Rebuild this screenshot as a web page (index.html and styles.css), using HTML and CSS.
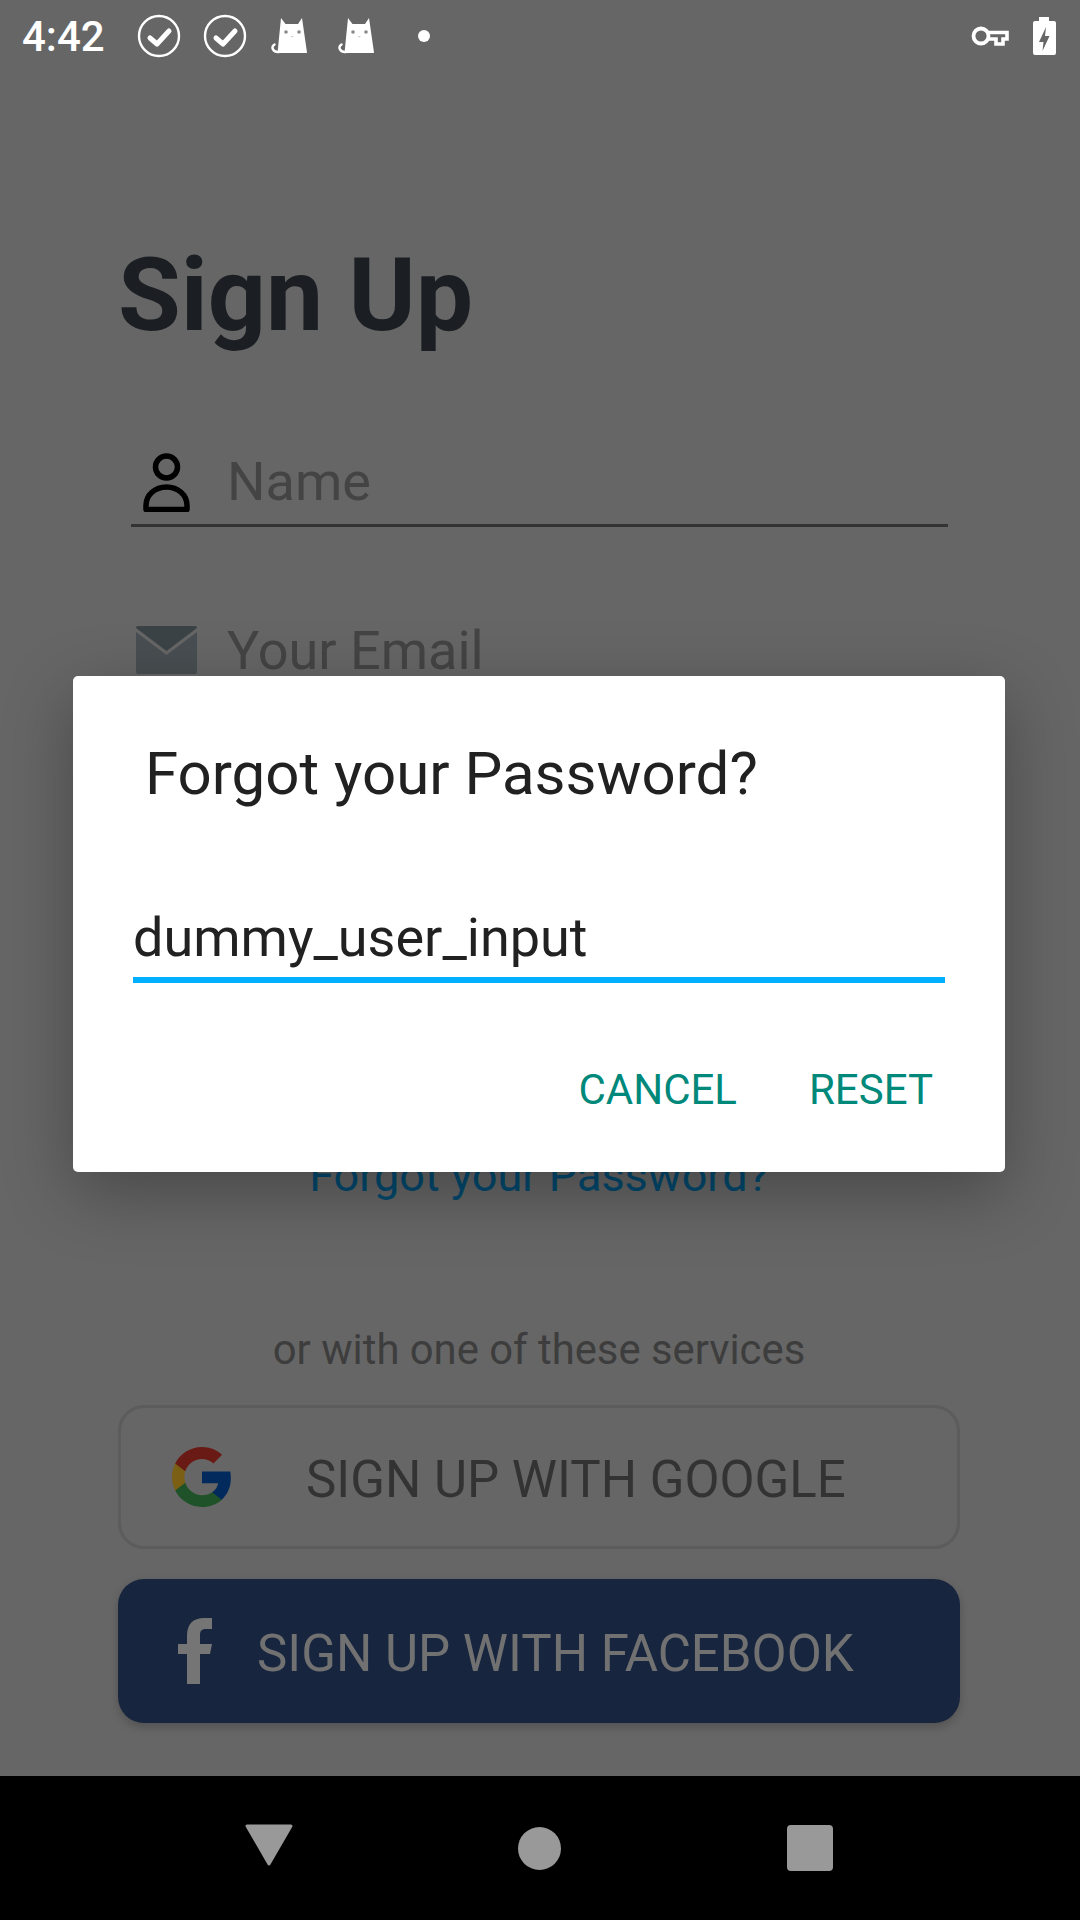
FILE: index.html
```html
<!DOCTYPE html>
<html lang="en">
<head>
<meta charset="utf-8">
<title>Sign Up</title>
<link rel="stylesheet" href="styles.css">
</head>
<body>
<div class="screen">
  <header class="status">
    <span class="time">4:42</span>
    <svg class="ic-check" viewBox="0 0 44 44"><circle cx="22" cy="22" r="20" fill="none" stroke="#fff" stroke-width="2.4"/><path d="M13 24l7 6 12-13" fill="none" stroke="#fff" stroke-width="5" stroke-linecap="round" stroke-linejoin="round"/></svg>
    <svg class="ic-check" viewBox="0 0 44 44"><circle cx="22" cy="22" r="20" fill="none" stroke="#fff" stroke-width="2.4"/><path d="M13 24l7 6 12-13" fill="none" stroke="#fff" stroke-width="5" stroke-linecap="round" stroke-linejoin="round"/></svg>
    <svg class="ic-cat" viewBox="0 0 38 36"><path fill="#fff" d="M11 0l4.500 6h12.500l4-6 5 34.500q0 .5-1 .5H7.500z"/><circle cx="16" cy="14" r="1.800" fill="#8a8a8a"/><circle cx="29" cy="14" r="1.800" fill="#8a8a8a"/><path d="M20.500 18h3.500l-1.700 1.500z" fill="#ccc"/><path d="M9 34C3 34.500 .5 29 4.500 26.500" fill="none" stroke="#fff" stroke-width="2.400" stroke-linecap="round"/></svg>
    <svg class="ic-cat" viewBox="0 0 38 36"><path fill="#fff" d="M11 0l4.500 6h12.500l4-6 5 34.500q0 .5-1 .5H7.500z"/><circle cx="16" cy="14" r="1.800" fill="#8a8a8a"/><circle cx="29" cy="14" r="1.800" fill="#8a8a8a"/><path d="M20.500 18h3.500l-1.700 1.500z" fill="#ccc"/><path d="M9 34C3 34.500 .5 29 4.500 26.500" fill="none" stroke="#fff" stroke-width="2.400" stroke-linecap="round"/></svg>
    <span class="dot"></span>
    <span class="status-spacer"></span>
    <svg class="ic-key" viewBox="0 0 38 20"><circle cx="10" cy="10" r="7.500" fill="none" stroke="#fff" stroke-width="3.800"/><path d="M17 6.500H36V13H32V18H25V13H17" fill="none" stroke="#fff" stroke-width="3.600"/></svg>
    <svg class="ic-batt" viewBox="0 0 23 38"><path fill="#fff" d="M6 0h10v4h5q2 0 2 2v30q0 2-2 2H2q-2 0-2-2V6q0-2 2-2h4z"/><path fill="#666" d="M13 10l-7 15h4.500l-1 9 7-15h-4.500z"/></svg>
  </header>

  <main class="content">
    <h1 class="title">Sign Up</h1>
    <div class="field field-name">
      <svg class="ic-person" viewBox="0 0 47 59"><circle cx="23.500" cy="14" r="11" fill="none" stroke="#000" stroke-width="5.500"/><path d="M3 56.500v-4C3 42 12 34 23.500 34S44 42 44 52.500v4z" fill="none" stroke="#000" stroke-width="5.500" stroke-linejoin="round"/></svg>
      <span class="placeholder">Name</span>
    </div>
    <div class="field field-email">
      <svg class="ic-mail" viewBox="0 0 61 48"><path fill="#3c4346" d="M2 0h57q2 0 2 2L30.500 25 0 2q0-2 2-2z"/><path fill="#484e51" d="M0 6l30.500 23L61 6v40q0 2-2 2H2q-2 0-2-2z"/></svg>
      <span class="placeholder">Your Email</span>
    </div>
    <a class="forgot">Forgot your Password?</a>
    <p class="or">or with one of these services</p>
    <div class="btn btn-google">
      <svg class="ic-google" viewBox="2 2 44 44"><path fill="#032a5c" d="M45.120 24.500c0-1.560-.14-3.060-.4-4.500H24v8.510h11.840c-.51 2.750-2.060 5.080-4.390 6.640v5.520h7.110c4.160-3.830 6.560-9.470 6.560-15.170z"/><path fill="#1f5228" d="M24 46c5.940 0 10.920-1.970 14.560-5.330l-7.110-5.520c-1.970 1.320-4.490 2.210-7.450 2.210-5.730 0-10.580-3.870-12.310-9.070H4.340v5.700C7.960 41.070 15.400 46 24 46z"/><path fill="#7a5f14" d="M11.690 28.180C11.250 26.860 11 25.450 11 24s.25-2.860.69-4.180v-5.700H4.340C2.850 17.090 2 20.450 2 24c0 3.550.85 6.910 2.340 9.880l7.350-5.700z"/><path fill="#6a1a14" d="M24 10.750c3.230 0 6.130 1.110 8.410 3.290l6.310-6.310C34.910 4.180 29.930 2 24 2 15.400 2 7.960 6.930 4.340 14.120l7.350 5.700c1.730-5.200 6.580-9.070 12.310-9.070z"/></svg>
      <span class="btn-label">SIGN UP WITH GOOGLE</span>
    </div>
    <div class="btn btn-facebook">
      <svg class="ic-fb" viewBox="0 0 34 66"><path fill="#757575" d="M9 66V36H0V26H9V18C9 6 15 0 26 0H34V11H28C23 11 22 13 22 18V26H34L32 36H22V66Z"/></svg>
      <span class="btn-label">SIGN UP WITH FACEBOOK</span>
    </div>
  </main>

  <nav class="navbar">
    <svg class="nav-back" viewBox="0 0 48 42"><path fill="#999" stroke="#999" stroke-width="3" stroke-linejoin="round" d="M2 2h44L24 40z"/></svg>
    <span class="nav-home"></span>
    <span class="nav-recent"></span>
  </nav>

  <section class="dialog">
    <h2 class="dialog-title">Forgot your Password?</h2>
    <div class="dialog-input">dummy_user_input</div>
    <div class="dialog-actions">
      <span>CANCEL</span>
      <span>RESET</span>
    </div>
  </section>
</div>
</body>
</html>
```
FILE: styles.css
```css
* { box-sizing: border-box; }
html, body { margin: 0; padding: 0; }
body { font-family: Roboto, "Liberation Sans", sans-serif; background: #666; }
.screen { position: relative; width: 1080px; height: 1920px; background: #666; display: flex; flex-direction: column; overflow: hidden; }

.status { height: 72px; flex: none; display: flex; align-items: center; padding: 0 24px 0 22px; color: #fff; }
.time { font-size: 42px; font-weight: 500; width: 115px; }
.ic-check { width: 44px; height: 44px; margin-right: 22px; }
.ic-cat { width: 38px; height: 36px; margin-right: 29px; }
.ic-check + .ic-cat { margin-left: 1px; }
.dot { width: 12px; height: 12px; border-radius: 50%; background: #fff; margin-left: 14px; }
.status-spacer { flex: 1; }
.ic-key { width: 38px; height: 20px; margin-right: 24px; }
.ic-batt { width: 23px; height: 38px; }

.content { flex: 1; display: flex; flex-direction: column; padding: 162px 120px 0 118px; }
.title { margin: 0; font-size: 102px; line-height: 122px; font-weight: 700; color: #1b1f23; }
.field { display: flex; align-items: center; margin-left: 13px; margin-right: 12px; }
.field-name { margin-top: 75px; height: 96px; border-bottom: 3px solid #333; padding: 10px 0 0 12px; }
.field-name .placeholder { margin: -2px 0 0 -1px; }
.field-email { margin-top: 83px; padding-left: 5px; height: 80px; }
.ic-person { width: 47px; height: 59px; margin-right: 38px; }
.ic-mail { width: 61px; height: 48px; margin-right: 30px; }
.placeholder { font-size: 54px; color: #444; }
.forgot { margin-top: 461px; text-align: center; font-size: 45px; line-height: 50px; color: #00496e; }
.or { margin: 125px 0 0; text-align: center; font-size: 41.8px; line-height: 48px; color: #3d3d3d; }
.btn { display: flex; align-items: center; height: 144px; border-radius: 26px; font-size: 51px; }
.btn-label { padding-top: 5px; }
.btn-google { margin-top: 31px; border: 3px solid #5c5c5c; color: #333; padding-left: 51px; }
.btn-facebook { margin-top: 30px; background: #18253f; color: #717171; padding-left: 60px; box-shadow: 0 4px 10px rgba(0,0,0,.2); }
.ic-google { width: 60px; height: 60px; margin-right: 74px; }
.ic-fb { width: 34px; height: 66px; margin-right: 45px; }

.navbar { height: 144px; flex: none; background: #000; display: grid; grid-template-columns: 271px 271px 270px; align-items: center; justify-items: center; padding-left: 133px; }
.nav-back { width: 48px; height: 42px; margin-bottom: 6px; }
.nav-home { width: 43px; height: 43px; border-radius: 50%; background: #999; }
.nav-recent { width: 46px; height: 46px; border-radius: 4px; background: #999; }

.dialog { position: absolute; left: 73px; top: 676px; width: 932px; height: 496px; background: #fff; border-radius: 5px; box-shadow: 0 20px 70px rgba(0,0,0,.3); padding: 0 60px; }
.dialog-title { margin: 65px 0 0 12px; font-size: 60px; line-height: 66px; font-weight: 400; color: #212121; }
.dialog-input { margin-top: 88px; height: 88px; padding-top: 1px; font-size: 54px; line-height: 83px; color: #212121; border-bottom: 6px solid #00b0ff; }
.dialog-actions { display: flex; justify-content: flex-end; gap: 72px; margin-top: 82px; margin-right: 12px; font-size: 42px; line-height: 50px; color: #00897b; }
```
